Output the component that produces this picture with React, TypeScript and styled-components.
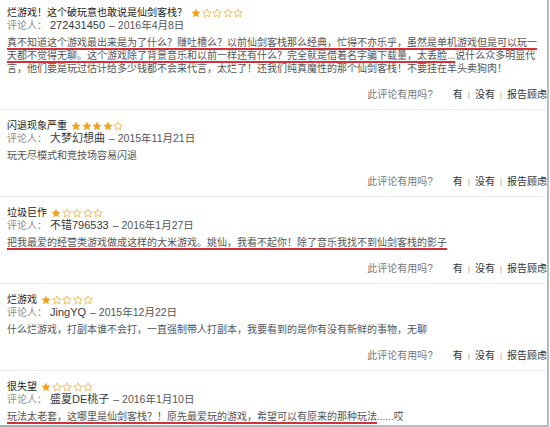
import React from 'react'
import styled, { createGlobalStyle } from 'styled-components'

const GlobalStyle = createGlobalStyle`
    html, body {
        margin: 0;
        padding: 0;
        background: #ffffff;
    }
    body {
        font-family: 'Liberation Sans', 'Noto Sans CJK SC', sans-serif;
    }
`

type Review = {
    title: string
    stars: number
    author: string
    date: string
    marked?: string
    text?: string
}

const reviews: Review[] = [
    {
        title: '烂游戏！这个破玩意也敢说是仙剑客栈？',
        stars: 1,
        author: '272431450',
        date: '2016年4月8日',
        marked: '真不知道这个游戏最出来是为了什么？赚吐槽么？以前仙剑客栈那么经典，忙得不亦乐乎，虽然是单机游戏但是可以玩一天都不觉得无聊。这个游戏除了背景音乐和以前一样还有什么？完全就是借着名字骗下载量，太丢脸...',
        text: '说什么众多明显代言，他们要是玩过估计给多少钱都不会来代言，太烂了！还我们纯真魔性的那个仙剑客栈！不要挂在羊头卖狗肉！',
    },
    {
        title: '闪退现象严重',
        stars: 4,
        author: '大梦幻想曲',
        date: '2015年11月21日',
        text: '玩无尽模式和竞技场容易闪退',
    },
    {
        title: '垃圾巨作',
        stars: 1,
        author: '不错796533',
        date: '2016年1月27日',
        marked: '把我最爱的经营类游戏做成这样的大米游戏。姚仙，我看不起你！除了音乐我找不到仙剑客栈的影子',
    },
    {
        title: '烂游戏',
        stars: 1,
        author: 'JingYQ',
        date: '2015年12月22日',
        text: '什么烂游戏，打副本谁不会打，一直强制带人打副本，我要看到的是你有没有新鲜的事物，无聊',
    },
    {
        title: '很失望',
        stars: 1,
        author: '盛夏DE桃子',
        date: '2016年1月10日',
        marked: '玩法太老套，这哪里是仙剑客栈？！原先最爱玩的游戏，希望可以有原来的那种玩法',
        text: '......哎',
    },
]

function Star({ filled }: { filled: boolean }) {
    return (
        <StarIcon viewBox="0 0 24 24">
            <path
                d="M12 2.2l2.9 6.6 7.2.7-5.4 4.8 1.6 7.1L12 17.7l-6.3 3.7 1.6-7.1-5.4-4.8 7.2-.7z"
                fill={filled ? '#f2a01c' : 'none'}
                stroke="#f2a01c"
                strokeWidth={filled ? 0.8 : 1.6}
                strokeLinejoin="round"
            />
        </StarIcon>
    )
}

export default function App() {
    return (
        <>
            <GlobalStyle />
            <Frame>
                {reviews.map((r, i) => (
                    <ReviewCard key={i} $first={i === 0}>
                        <TitleRow>
                            <Title>{r.title}</Title>
                            <Stars>
                                {[0, 1, 2, 3, 4].map((s) => (
                                    <Star key={s} filled={s < r.stars} />
                                ))}
                            </Stars>
                        </TitleRow>
                        <ReviewerRow>
                            <Label>评论人：</Label>
                            <Name>{r.author}</Name>
                            <DateText>– {r.date}</DateText>
                        </ReviewerRow>
                        <Body>
                            {r.marked && <Marked>{r.marked}</Marked>}
                            {r.text}
                        </Body>
                        {/* last card is cut by the bottom of the screenshot */}
                        {i < reviews.length - 1 && (
                            <HelpfulRow>
                                <Question>此评论有用吗?</Question>
                                <Action>有</Action>
                                <Pipe>|</Pipe>
                                <Action>没有</Action>
                                <Pipe>|</Pipe>
                                <Action>报告顾虑</Action>
                            </HelpfulRow>
                        )}
                    </ReviewCard>
                ))}
            </Frame>
        </>
    )
}

const Frame = styled.div`
    position: relative;
    width: 549px;
    height: 427px;
    box-sizing: border-box;
    border-right: 2px solid #bcbcbc;
    overflow: hidden;
    background: #ffffff;

    &::after {
        content: '';
        position: absolute;
        left: 0;
        right: 0;
        bottom: 0;
        height: 2px;
        background: linear-gradient(to right, #86bdb8 0, #9cc6c2 70%, #bdbdbd 70%);
    }
`

const ReviewCard = styled.div<{ $first: boolean }>`
    display: flex;
    flex-direction: column;
    padding: ${(p) => (p.$first ? '7px' : '10px')} 0 8px 7px;
    border-bottom: 1px solid #ededed;
`

const TitleRow = styled.div`
    display: flex;
    align-items: center;
    height: 12px;
`

const Title = styled.div`
    font-size: 10px;
    line-height: 12px;
    color: #222222;
`

const Stars = styled.div`
    display: flex;
    gap: 0.5px;
    margin-left: 4px;
`

const StarIcon = styled.svg`
    width: 10px;
    height: 10px;
`

const ReviewerRow = styled.div`
    display: flex;
    align-items: baseline;
    height: 12px;
    line-height: 12px;
    font-size: 10px;
`

const Label = styled.span`
    color: #8a8a8a;
    margin-right: 3px;
`

const Name = styled.span`
    font-size: 11px;
    color: #3a3a3a;
    margin-right: 4px;
`

const DateText = styled.span`
    font-size: 10.5px;
    color: #555555;
`

const Body = styled.div`
    margin-top: 5px;
    width: 535px;
    font-size: 10px;
    line-height: 13px;
    color: #555555;
`

const Marked = styled.span`
    text-decoration: underline;
    text-decoration-color: #d3303a;
    text-decoration-thickness: 1.5px;
    text-underline-offset: 1.5px;
`

const HelpfulRow = styled.div`
    display: flex;
    justify-content: flex-end;
    align-items: center;
    margin-top: 13px;
    height: 13px;
    font-size: 10px;
    line-height: 13px;
`

const Question = styled.span`
    color: #777777;
    margin-right: 20px;
`

const Action = styled.span`
    color: #333333;
`

const Pipe = styled.span`
    color: #999999;
    font-size: 8px;
    margin: 0 5px;
`
